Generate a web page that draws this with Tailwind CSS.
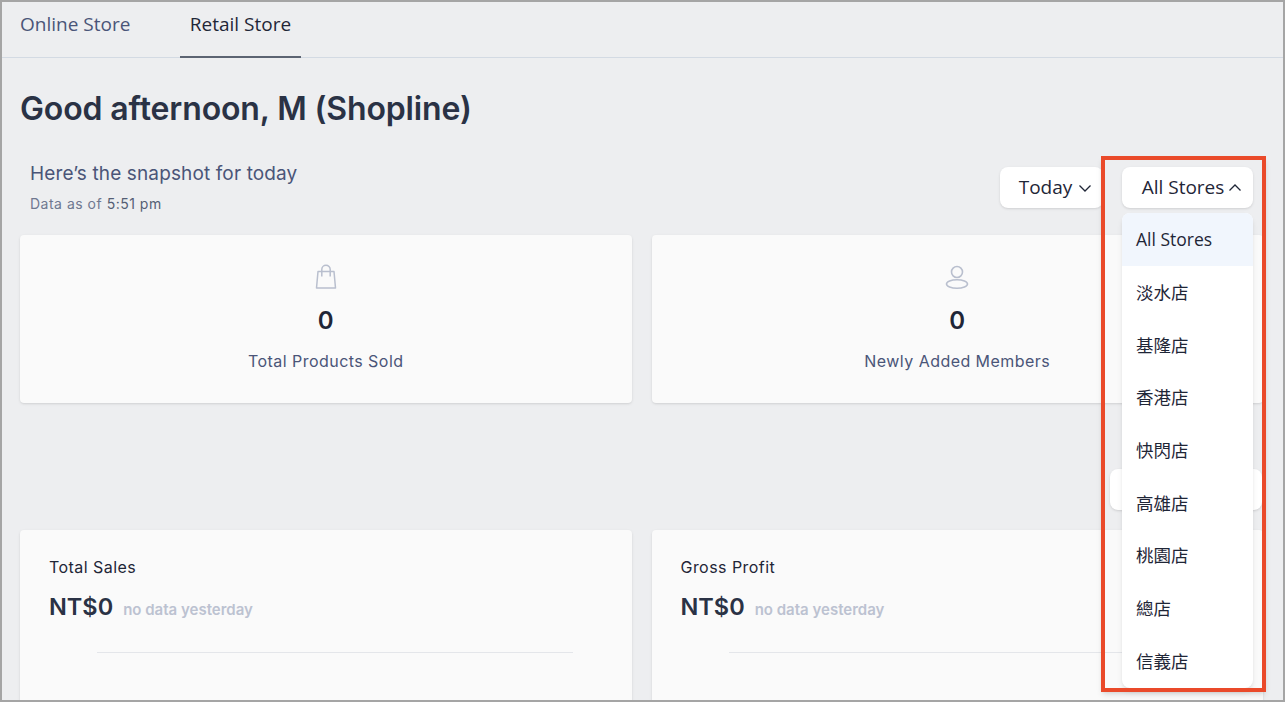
<!DOCTYPE html>
<html lang="en">
<head>
  <meta charset="UTF-8" />
  <title>Retail Store</title>
  <script src="https://cdn.jsdelivr.net/npm/@tailwindcss/browser@4"></script>
</head>
<body class="w-[1285px] h-[702px] overflow-hidden bg-white font-['Inter','Noto_Sans_CJK_TC',sans-serif]">
  <div class="relative w-full h-full overflow-hidden border-2 border-[#a5a5a5] bg-[#edeef0]">

    <!-- tabs -->
    <div class="flex h-[56px] border-b border-[#d3dae3] pl-[18px] text-[19px] leading-[28px] font-['Open_Sans',sans-serif]">
      <div class="w-[111px] pt-[8px] text-[#4a5578]">Online Store</div>
      <div class="ml-[49px] w-[121px] h-[56px] border-b-2 border-[#5c6472] pt-[8px] text-center text-[#1f2637]">Retail Store</div>
    </div>

    <div class="px-[18px]">
      <h1 class="mt-[30px] text-[32px] leading-[42px] font-semibold tracking-[-0.13px] text-[#2a3245]">Good afternoon, M (Shopline)</h1>

      <!-- snapshot header -->
      <div class="flex justify-between mt-[30px] h-[75px]">
        <div class="pl-[10px]">
          <div class="text-[19px] leading-[28px] tracking-[0.13px] text-[#4a5578]">Here’s the snapshot for today</div>
          <div class="mt-[7px] text-[14px] leading-[18px] tracking-[0.5px] text-[#6f7890]">Data as of <span class="text-[#555e75]">5:51 pm</span></div>
        </div>
        <div class="flex gap-[19px] pt-[7px] pr-[12px] font-['Open_Sans',sans-serif]">
          <div class="flex items-center justify-center gap-[6px] w-[103px] h-[41px] pl-[8px] rounded-lg bg-white shadow-sm text-[19px] text-[#1f2637]">
            Today
            <svg class="w-[14px] h-[14px]" viewBox="0 0 14 14" fill="none" stroke="#1f2637" stroke-width="1.3"><path d="M1.500 4.500 7 10 12.500 4.500" /></svg>
          </div>
          <div class="flex items-center justify-center gap-[4px] w-[131px] h-[41px] pl-[9px] rounded-lg bg-white shadow-sm text-[19px] text-[#1f2637]">
            All Stores
            <svg class="w-[14px] h-[14px]" viewBox="0 0 14 14" fill="none" stroke="#1f2637" stroke-width="1.3"><path d="M1.500 9.500 7 4 12.500 9.500" /></svg>
          </div>
        </div>
      </div>

      <!-- stat cards -->
      <div class="grid grid-cols-2 gap-[20px] w-[1243px]">
        <div class="flex flex-col items-center h-[168px] rounded bg-[#fafafa] shadow-sm pt-[29px]">
          <svg class="w-[22px] h-[26px]" viewBox="0 0 22 26" fill="none" stroke="#b9bfce" stroke-width="1.5" stroke-linejoin="round"><path d="M3 7.500h16l1.500 16.500h-19z" /><path d="M6.800 12.500V5.500a4.200 4.200 0 0 1 8.400 0v7" /></svg>
          <div class="mt-[15px] text-[24px] leading-[32px] font-semibold text-[#1f2637]">0</div>
          <div class="mt-[12px] text-[16px] leading-[24px] tracking-[0.45px] text-[#4a5578]">Total Products Sold</div>
        </div>
        <div class="flex flex-col items-center h-[168px] rounded bg-[#fafafa] shadow-sm pt-[29px]">
          <svg class="w-[24px] h-[26px]" viewBox="0 0 24 26" fill="none" stroke="#b9bfce" stroke-width="1.6"><circle cx="12" cy="8" r="5.500" /><ellipse cx="12" cy="20" rx="10.500" ry="4.200" /></svg>
          <div class="mt-[15px] text-[24px] leading-[32px] font-semibold text-[#1f2637]">0</div>
          <div class="mt-[12px] text-[16px] leading-[24px] tracking-[0.45px] text-[#4a5578]">Newly Added Members</div>
        </div>
      </div>

      <!-- button hidden behind the dropdown -->
      <div class="flex justify-end w-[1242px] mt-[66px]">
        <div class="w-[152px] h-[41px] rounded-lg bg-white shadow-sm"></div>
      </div>

      <!-- sales cards -->
      <div class="grid grid-cols-2 gap-[20px] w-[1243px] mt-[20px]">
        <div class="h-[200px] rounded bg-[#fafafa] shadow-sm px-[29px] pt-[26px]">
          <div class="text-[16px] leading-[22px] tracking-[0.45px] text-[#1f2637]">Total Sales</div>
          <div class="flex items-baseline gap-[10px] mt-[13px]">
            <span class="text-[23.500px] leading-[32px] font-semibold text-[#2a3245]">NT$0</span>
            <span class="text-[15px] leading-[20px] font-semibold text-[#bcc2d1]">no data yesterday</span>
          </div>
          <div class="mt-[29px] ml-[48px] mr-[30px] border-t border-[#e4e6ea]"></div>
        </div>
        <div class="h-[200px] rounded bg-[#fafafa] shadow-sm px-[29px] pt-[26px]">
          <div class="text-[16px] leading-[22px] tracking-[0.45px] text-[#1f2637]">Gross Profit</div>
          <div class="flex items-baseline gap-[10px] mt-[13px]">
            <span class="text-[23.500px] leading-[32px] font-semibold text-[#2a3245]">NT$0</span>
            <span class="text-[15px] leading-[20px] font-semibold text-[#bcc2d1]">no data yesterday</span>
          </div>
          <div class="mt-[29px] ml-[48px] mr-[30px] border-t border-[#e4e6ea]"></div>
        </div>
      </div>
    </div>

    <!-- store dropdown -->
    <ul class="absolute left-[1120px] top-[211px] w-[131px] h-[475px] overflow-hidden rounded-lg bg-white shadow-md text-[17.500px] text-[#1f2637] font-['Open_Sans','Noto_Sans_CJK_TC',sans-serif]">
      <li class="flex items-center h-[52.700px] pl-[14px] bg-[#f1f6fd]">All Stores</li>
      <li class="flex items-center h-[52.700px] pl-[14px]">淡水店</li>
      <li class="flex items-center h-[52.700px] pl-[14px]">基隆店</li>
      <li class="flex items-center h-[52.700px] pl-[14px]">香港店</li>
      <li class="flex items-center h-[52.700px] pl-[14px]">快閃店</li>
      <li class="flex items-center h-[52.700px] pl-[14px]">高雄店</li>
      <li class="flex items-center h-[52.700px] pl-[14px]">桃園店</li>
      <li class="flex items-center h-[52.700px] pl-[14px]">總店</li>
      <li class="flex items-center h-[52.700px] pl-[14px]">信義店</li>
    </ul>

    <!-- red highlight -->
    <div class="absolute left-[1099px] top-[154px] w-[165px] h-[536px] border-4 border-[#ea4a2a] shadow-md"></div>
  </div>
</body>
</html>
